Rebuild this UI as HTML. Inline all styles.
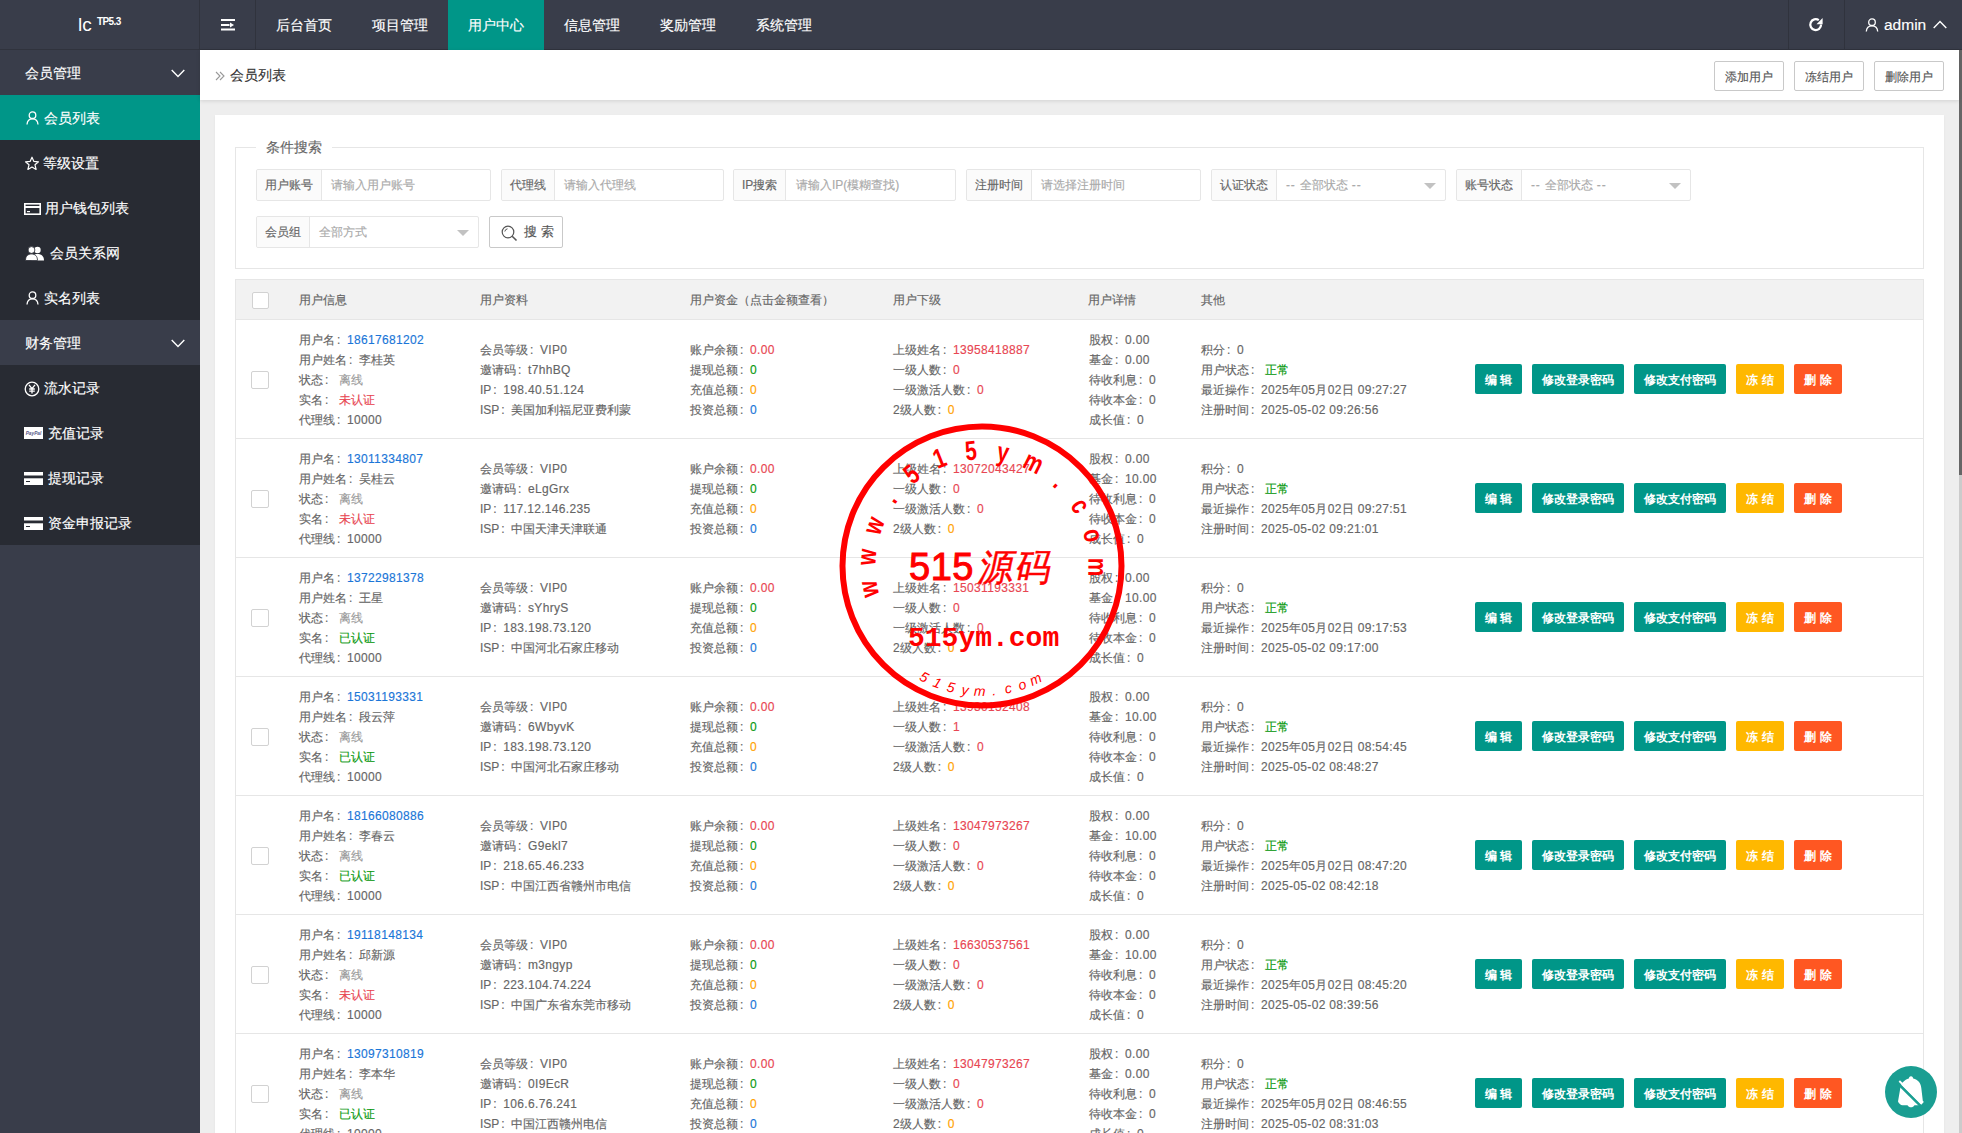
<!DOCTYPE html>
<html><head><meta charset="utf-8"><title>会员列表</title>
<style>
*{margin:0;padding:0;box-sizing:border-box}
html,body{width:1962px;height:1133px;overflow:hidden}
body{position:relative;background:#eeeeee;font-family:"Liberation Sans",sans-serif;font-size:12px;color:#666}
.abs{position:absolute}
/* header */
.hd{position:absolute;left:0;top:0;width:1962px;height:50px;background:#393D4A;border-bottom:1px solid #30333d}
.vl{position:absolute;top:0;width:1px;height:49px;background:#30333d}
.logo{position:absolute;left:78px;top:15px;color:#fff;font-size:19px;line-height:19px}
.logo sup{font-size:10px;position:absolute;left:18px;top:-1px;line-height:14px;font-weight:bold}
.nav{position:absolute;top:0;height:49px;line-height:49px;padding-top:1px;color:#fff;font-size:14px;text-align:center;width:96px}
.nav.on{background:#009688;height:50px}
.admin{position:absolute;left:1884px;top:13px;line-height:24px;color:#fff;font-size:15.5px}
.scroll{position:absolute;left:1959px;top:50px;width:3px;height:1083px;background:linear-gradient(#666 0,#666 425px,#cbcbcb 425px)}
/* side */
.side{position:absolute;left:0;top:50px;width:200px;height:1083px;background:#393D4A}
.mi{position:absolute;left:0;width:200px;height:45px;line-height:45px;color:#fff;font-size:14px}
.mi.child{background:#282B33}
.mi.on{background:#009688}
.mi span{position:absolute;top:1px}
/* content */
.crumb{position:absolute;left:200px;top:50px;width:1759px;height:50px;background:#fff;box-shadow:0 1px 4px rgba(0,0,0,.12)}
.crumb .t{position:absolute;left:30px;top:15px;line-height:20px;font-size:14px;color:#333}
.tb{position:absolute;top:11px;height:30px;line-height:30px;border:1px solid #c9c9c9;border-radius:2px;background:#fff;color:#555;font-size:12px;text-align:center;width:70px}
.card{position:absolute;left:215px;top:115px;width:1729px;height:1100px;background:#fff;box-shadow:0 1px 2px rgba(0,0,0,.06)}
.fs{position:absolute;left:235px;top:147px;width:1689px;height:122px;border:1px solid #e6e6e6}
.legend{position:absolute;left:256px;top:137px;padding:0 10px;background:#fff;font-size:14px;line-height:20px;color:#666}
.ig{position:absolute;height:32px;border:1px solid #e6e6e6;border-radius:2px;background:#fff}
.ig .lb{position:absolute;left:0;top:0;height:30px;line-height:31px;padding:0 8px;background:#FBFBFB;border-right:1px solid #e6e6e6;color:#666;font-size:12px;border-radius:2px 0 0 2px}
.ig .ph{position:absolute;top:0;height:30px;line-height:31px;color:#aaa;font-size:12px;white-space:nowrap}
.ig .ph s{text-decoration:none;letter-spacing:0.8px}
.tri{position:absolute;top:13px;width:0;height:0;border-left:6px solid transparent;border-right:6px solid transparent;border-top:6px solid #c2c2c2}
.sbtn{position:absolute;left:489px;top:216px;width:74px;height:32px;border:1px solid #c9c9c9;border-radius:2px;background:#fff;color:#555;font-size:13px;line-height:30px}
/* table */
.th{position:absolute;left:235px;top:279px;width:1689px;height:41px;background:#f2f2f2;border:1px solid #e6e6e6}
.th span{position:absolute;top:10px;line-height:20px;color:#666;font-size:12px}
.tbody{position:absolute;left:235px;top:320px;width:1689px;height:900px;border-left:1px solid #e6e6e6;border-right:1px solid #e6e6e6}
.tr{position:absolute;left:235px;width:1689px;height:119px;border-bottom:1px solid #e6e6e6}
.cb{position:absolute;left:16px;width:18px;height:18px;border:1px solid #d2d2d2;background:#fff;border-radius:2px}
.c{position:absolute;line-height:20px;font-size:12px;color:#666;white-space:nowrap}
.c p{height:20px}
.c b,.c i{font-weight:normal;font-style:normal}
.c1{left:64px;top:10px}
.c2{left:245px;top:20px}
.c3{left:455px;top:20px}
.c4{left:658px;top:20px}
.c5{left:854px;top:10px}
.c6{left:966px;top:20px}
.c i{padding-left:3.5px}
.c b{letter-spacing:0.33px}
.c u{display:inline-block;width:12px;padding-left:2px;text-decoration:none}
.blue{color:#1A76D8}
.red{color:#E84652}
.green{color:#0A990F}
.orange{color:#FFA200}
.gray{color:#9a9a9a}
.btns{position:absolute;left:1240px;top:44px}
.bt{position:absolute;top:0;height:30px;line-height:32px;border-radius:2px;color:#fff;font-size:12px;font-weight:bold;text-align:center;white-space:nowrap}
.teal{background:#009688}
.yel{background:#FFB800}
.org{background:#FF5722}
.fab{position:absolute;left:1885px;top:1066px;width:52px;height:52px;border-radius:50%;background:#1a9e92}
.c,.th span,.mi span,.nav,.ig .lb,.ig .ph,.legend,.crumb .t,.tb,.admin,.sbtn span{-webkit-text-stroke:0.15px currentColor}

</style></head>
<body>
<div class="hd">
  <div class="vl" style="left:199px"></div>
  <div class="vl" style="left:255px"></div>
  <div class="vl" style="left:1788px"></div>
  <div class="vl" style="left:1844px"></div>
  <div class="logo">lc</div><div class="abs" style="left:97px;top:16.4px;font-size:10px;line-height:11px;font-weight:bold;color:#fff;letter-spacing:-0.6px">TP5.3</div>
  <svg class="abs" style="left:221px;top:19px" width="14" height="12" viewBox="0 0 14 12"><rect x="0" y="0" width="14" height="2" fill="#fff"/><rect x="0" y="5" width="8.5" height="2" fill="#fff"/><path d="M9 3.6 L13 6 L9 8.4 Z" fill="#fff"/><rect x="0" y="9.5" width="14" height="2" fill="#fff"/></svg>
  <div class="nav" style="left:256px">后台首页</div>
  <div class="nav" style="left:352px">项目管理</div>
  <div class="nav on" style="left:448px">用户中心</div>
  <div class="nav" style="left:544px">信息管理</div>
  <div class="nav" style="left:640px">奖励管理</div>
  <div class="nav" style="left:736px">系统管理</div>
  <svg class="abs" style="left:1808px;top:17px" width="16" height="16" viewBox="0 0 16 16"><path d="M13.1 7.6 A5.4 5.4 0 1 1 10.8 3.2" fill="none" stroke="#fff" stroke-width="2.2"/><path d="M8.5 7.2 L14.6 7.2 L14.6 1 Z" fill="#fff"/></svg>
  <svg class="abs" style="left:1865px;top:18px" width="14" height="14" viewBox="0 0 14 14"><circle cx="7" cy="4.2" r="3.3" fill="none" stroke="#fff" stroke-width="1.3"/><path d="M1.3 13.5 C1.6 9.6 4 7.8 7 7.8 C10 7.8 12.4 9.6 12.7 13.5" fill="none" stroke="#fff" stroke-width="1.3"/></svg>
  <div class="admin">admin</div>
  <svg class="abs" style="left:1933px;top:20px" width="14" height="9" viewBox="0 0 14 9"><path d="M0.7 8 L7 1.5 L13.3 8" fill="none" stroke="#fff" stroke-width="1.4"/></svg>
</div>
<div class="scroll"></div>

<div class="side">
  <div class="mi" style="top:0"><span style="left:25px">会员管理</span><svg class="abs" style="left:171px;top:19px" width="14" height="9" viewBox="0 0 14 9"><path d="M0.7 1 L7 7.5 L13.3 1" fill="none" stroke="#fff" stroke-width="1.4"/></svg></div>
  <div class="mi on" style="top:45px"><svg class="abs" style="left:26px;top:16px" width="13" height="14" viewBox="0 0 13 14"><circle cx="6.5" cy="4.2" r="3.3" fill="none" stroke="#fff" stroke-width="1.3"/><path d="M1 13.5 C1.3 9.6 3.6 7.8 6.5 7.8 C9.4 7.8 11.7 9.6 12 13.5" fill="none" stroke="#fff" stroke-width="1.3"/></svg><span style="left:44px">会员列表</span></div>
  <div class="mi child" style="top:90px"><svg class="abs" style="left:24px;top:16px" width="16" height="15" viewBox="0 0 16 15"><path d="M8 1.2 L9.9 5.4 L14.5 5.8 L11 8.8 L12.1 13.4 L8 11 L3.9 13.4 L5 8.8 L1.5 5.8 L6.1 5.4 Z" fill="none" stroke="#fff" stroke-width="1.2" stroke-linejoin="round"/></svg><span style="left:43px">等级设置</span></div>
  <div class="mi child" style="top:135px"><svg class="abs" style="left:24px;top:18px" width="17" height="12" viewBox="0 0 17 12"><rect x="0.8" y="0.8" width="15.4" height="10.4" fill="none" stroke="#fff" stroke-width="1.6"/><rect x="0.8" y="3" width="15.4" height="2" fill="#fff"/><rect x="3" y="8" width="3" height="1.2" fill="#fff"/></svg><span style="left:45px">用户钱包列表</span></div>
  <div class="mi child" style="top:180px"><svg class="abs" style="left:25px;top:16px" width="20" height="15" viewBox="0 0 20 15"><circle cx="12.5" cy="4" r="3.2" fill="#fff"/><path d="M6.5 14.5 C6.5 10 9 8 12.5 8 C16 8 19 10 19 14.5 Z" fill="#fff"/><circle cx="6.5" cy="4" r="3.4" fill="#fff" stroke="#282B33" stroke-width="0.8"/><path d="M0.5 14.5 C0.5 10 3 8 6.5 8 C10 8 12.5 10 12.5 14.5 Z" fill="#fff" stroke="#282B33" stroke-width="0.8"/></svg><span style="left:50px">会员关系网</span></div>
  <div class="mi child" style="top:225px"><svg class="abs" style="left:26px;top:16px" width="13" height="14" viewBox="0 0 13 14"><circle cx="6.5" cy="4.2" r="3.3" fill="none" stroke="#fff" stroke-width="1.3"/><path d="M1 13.5 C1.3 9.6 3.6 7.8 6.5 7.8 C9.4 7.8 11.7 9.6 12 13.5" fill="none" stroke="#fff" stroke-width="1.3"/></svg><span style="left:44px">实名列表</span></div>
  <div class="mi" style="top:270px"><span style="left:25px">财务管理</span><svg class="abs" style="left:171px;top:19px" width="14" height="9" viewBox="0 0 14 9"><path d="M0.7 1 L7 7.5 L13.3 1" fill="none" stroke="#fff" stroke-width="1.4"/></svg></div>
  <div class="mi child" style="top:315px"><svg class="abs" style="left:24px;top:16px" width="16" height="16" viewBox="0 0 16 16"><circle cx="8" cy="8" r="6.8" fill="none" stroke="#fff" stroke-width="1.3"/><path d="M5 3.8 L8 7.6 L11 3.8 M8 7.6 V12.6 M5.2 8 H10.8 M5.2 10.2 H10.8" fill="none" stroke="#fff" stroke-width="1.3"/></svg><span style="left:44px">流水记录</span></div>
  <div class="mi child" style="top:360px"><svg class="abs" style="left:24px;top:17px" width="19" height="12" viewBox="0 0 19 12"><rect x="0" y="0" width="19" height="12" fill="#fff"/><text x="9.5" y="7.8" font-size="4.8" fill="#5a5a8a" text-anchor="middle" font-style="italic" font-weight="bold" font-family="Liberation Sans">PayPal</text></svg><span style="left:48px">充值记录</span></div>
  <div class="mi child" style="top:405px"><svg class="abs" style="left:24px;top:17px" width="19" height="13" viewBox="0 0 19 13"><rect x="0" y="0" width="19" height="13" fill="#fff"/><rect x="0" y="3.5" width="19" height="2.8" fill="#282B33"/><rect x="2" y="9" width="4" height="1" fill="#282B33"/></svg><span style="left:48px">提现记录</span></div>
  <div class="mi child" style="top:450px"><svg class="abs" style="left:24px;top:17px" width="19" height="13" viewBox="0 0 19 13"><rect x="0" y="0" width="19" height="13" fill="#fff"/><rect x="0" y="3.5" width="19" height="2.8" fill="#282B33"/><rect x="2" y="9" width="4" height="1" fill="#282B33"/></svg><span style="left:48px">资金申报记录</span></div>
</div>

<div class="crumb">
  <svg class="abs" style="left:15px;top:21px" width="10" height="10" viewBox="0 0 10 10"><path d="M1 1 L5 5 L1 9 M5 1 L9 5 L5 9" fill="none" stroke="#999" stroke-width="1.1"/></svg>
  <div class="t">会员列表</div>
  <div class="tb" style="left:1514px">添加用户</div>
  <div class="tb" style="left:1594px">冻结用户</div>
  <div class="tb" style="left:1674px">删除用户</div>
</div>

<div class="card"></div>
<div class="fs"></div>
<div class="legend">条件搜索</div>

<div class="ig" style="left:256px;top:169px;width:235px"><div class="lb">用户账号</div><div class="ph" style="left:74px">请输入用户账号</div></div>
<div class="ig" style="left:501px;top:169px;width:223px"><div class="lb">代理线</div><div class="ph" style="left:62px">请输入代理线</div></div>
<div class="ig" style="left:733px;top:169px;width:223px"><div class="lb">IP搜索</div><div class="ph" style="left:62px">请输入IP(模糊查找)</div></div>
<div class="ig" style="left:966px;top:169px;width:235px"><div class="lb">注册时间</div><div class="ph" style="left:74px">请选择注册时间</div></div>
<div class="ig" style="left:1211px;top:169px;width:235px"><div class="lb">认证状态</div><div class="ph" style="left:74px"><s>--&nbsp;</s>全部状态<s>&nbsp;--</s></div><div class="tri" style="left:212px"></div></div>
<div class="ig" style="left:1456px;top:169px;width:235px"><div class="lb">账号状态</div><div class="ph" style="left:74px"><s>--&nbsp;</s>全部状态<s>&nbsp;--</s></div><div class="tri" style="left:212px"></div></div>
<div class="ig" style="left:256px;top:216px;width:223px"><div class="lb">会员组</div><div class="ph" style="left:62px">全部方式</div><div class="tri" style="left:200px"></div></div>
<div class="sbtn"><svg class="abs" style="left:11px;top:8px" width="17" height="17" viewBox="0 0 17 17"><circle cx="7" cy="7" r="5.8" fill="none" stroke="#555" stroke-width="1.2"/><path d="M11.2 11.2 L15.5 15.5" stroke="#555" stroke-width="1.6"/><path d="M3.8 6.5 A3.3 3.3 0 0 1 6.5 3.8" fill="none" stroke="#555" stroke-width="1"/></svg><span class="abs" style="left:34px;top:0">搜 索</span></div>

<div class="th">
  <span class="cb" style="left:16px;top:12px;width:17px;height:17px"></span>
  <span style="left:63px">用户信息</span>
  <span style="left:244px">用户资料</span>
  <span style="left:454px">用户资金（点击金额查看）</span>
  <span style="left:657px">用户下级</span>
  <span style="left:852px">用户详情</span>
  <span style="left:965px">其他</span>
</div>
<div class="tbody"></div>
<div class="tr" style="top:320px">
<span class="cb" style="top:51px"></span>
<div class="c c1"><p>用户名<u>:</u><b class="blue">18617681202</b></p><p>用户姓名<u>:</u>李桂英</p><p>状态<u>:</u><i class="gray">离线</i></p><p>实名<u>:</u><i class="red">未认证</i></p><p>代理线<u>:</u><b>10000</b></p></div>
<div class="c c2"><p>会员等级<u>:</u><b>VIP0</b></p><p>邀请码<u>:</u><b>t7hhBQ</b></p><p>IP<u>:</u><b>198.40.51.124</b></p><p>ISP<u>:</u>美国加利福尼亚费利蒙</p></div>
<div class="c c3"><p>账户余额<u>:</u><b class="red">0.00</b></p><p>提现总额<u>:</u><b class="green">0</b></p><p>充值总额<u>:</u><b class="orange">0</b></p><p>投资总额<u>:</u><b class="blue">0</b></p></div>
<div class="c c4"><p>上级姓名<u>:</u><b class="red">13958418887</b></p><p>一级人数<u>:</u><b class="red">0</b></p><p>一级激活人数<u>:</u><b class="red">0</b></p><p>2级人数<u>:</u><b class="orange">0</b></p></div>
<div class="c c5"><p>股权<u>:</u><b>0.00</b></p><p>基金<u>:</u><b>0.00</b></p><p>待收利息<u>:</u><b>0</b></p><p>待收本金<u>:</u><b>0</b></p><p>成长值<u>:</u><b>0</b></p></div>
<div class="c c6"><p>积分<u>:</u><b>0</b></p><p>用户状态<u>:</u><i class="green">正常</i></p><p>最近操作<u>:</u><b>2025年05月02日 09:27:27</b></p><p>注册时间<u>:</u><b>2025-05-02 09:26:56</b></p></div>
<div class="btns"><span class="bt teal" style="width:47px">编 辑</span><span class="bt teal" style="left:57px;width:92px">修改登录密码</span><span class="bt teal" style="left:159px;width:92px">修改支付密码</span><span class="bt yel" style="left:261px;width:48px">冻 结</span><span class="bt org" style="left:319px;width:48px">删 除</span></div>
</div>
<div class="tr" style="top:439px">
<span class="cb" style="top:51px"></span>
<div class="c c1"><p>用户名<u>:</u><b class="blue">13011334807</b></p><p>用户姓名<u>:</u>吴桂云</p><p>状态<u>:</u><i class="gray">离线</i></p><p>实名<u>:</u><i class="red">未认证</i></p><p>代理线<u>:</u><b>10000</b></p></div>
<div class="c c2"><p>会员等级<u>:</u><b>VIP0</b></p><p>邀请码<u>:</u><b>eLgGrx</b></p><p>IP<u>:</u><b>117.12.146.235</b></p><p>ISP<u>:</u>中国天津天津联通</p></div>
<div class="c c3"><p>账户余额<u>:</u><b class="red">0.00</b></p><p>提现总额<u>:</u><b class="green">0</b></p><p>充值总额<u>:</u><b class="orange">0</b></p><p>投资总额<u>:</u><b class="blue">0</b></p></div>
<div class="c c4"><p>上级姓名<u>:</u><b class="red">13072043427</b></p><p>一级人数<u>:</u><b class="red">0</b></p><p>一级激活人数<u>:</u><b class="red">0</b></p><p>2级人数<u>:</u><b class="orange">0</b></p></div>
<div class="c c5"><p>股权<u>:</u><b>0.00</b></p><p>基金<u>:</u><b>10.00</b></p><p>待收利息<u>:</u><b>0</b></p><p>待收本金<u>:</u><b>0</b></p><p>成长值<u>:</u><b>0</b></p></div>
<div class="c c6"><p>积分<u>:</u><b>0</b></p><p>用户状态<u>:</u><i class="green">正常</i></p><p>最近操作<u>:</u><b>2025年05月02日 09:27:51</b></p><p>注册时间<u>:</u><b>2025-05-02 09:21:01</b></p></div>
<div class="btns"><span class="bt teal" style="width:47px">编 辑</span><span class="bt teal" style="left:57px;width:92px">修改登录密码</span><span class="bt teal" style="left:159px;width:92px">修改支付密码</span><span class="bt yel" style="left:261px;width:48px">冻 结</span><span class="bt org" style="left:319px;width:48px">删 除</span></div>
</div>
<div class="tr" style="top:558px">
<span class="cb" style="top:51px"></span>
<div class="c c1"><p>用户名<u>:</u><b class="blue">13722981378</b></p><p>用户姓名<u>:</u>王星</p><p>状态<u>:</u><i class="gray">离线</i></p><p>实名<u>:</u><i class="green">已认证</i></p><p>代理线<u>:</u><b>10000</b></p></div>
<div class="c c2"><p>会员等级<u>:</u><b>VIP0</b></p><p>邀请码<u>:</u><b>sYhryS</b></p><p>IP<u>:</u><b>183.198.73.120</b></p><p>ISP<u>:</u>中国河北石家庄移动</p></div>
<div class="c c3"><p>账户余额<u>:</u><b class="red">0.00</b></p><p>提现总额<u>:</u><b class="green">0</b></p><p>充值总额<u>:</u><b class="orange">0</b></p><p>投资总额<u>:</u><b class="blue">0</b></p></div>
<div class="c c4"><p>上级姓名<u>:</u><b class="red">15031193331</b></p><p>一级人数<u>:</u><b class="red">0</b></p><p>一级激活人数<u>:</u><b class="red">0</b></p><p>2级人数<u>:</u><b class="orange">0</b></p></div>
<div class="c c5"><p>股权<u>:</u><b>0.00</b></p><p>基金<u>:</u><b>10.00</b></p><p>待收利息<u>:</u><b>0</b></p><p>待收本金<u>:</u><b>0</b></p><p>成长值<u>:</u><b>0</b></p></div>
<div class="c c6"><p>积分<u>:</u><b>0</b></p><p>用户状态<u>:</u><i class="green">正常</i></p><p>最近操作<u>:</u><b>2025年05月02日 09:17:53</b></p><p>注册时间<u>:</u><b>2025-05-02 09:17:00</b></p></div>
<div class="btns"><span class="bt teal" style="width:47px">编 辑</span><span class="bt teal" style="left:57px;width:92px">修改登录密码</span><span class="bt teal" style="left:159px;width:92px">修改支付密码</span><span class="bt yel" style="left:261px;width:48px">冻 结</span><span class="bt org" style="left:319px;width:48px">删 除</span></div>
</div>
<div class="tr" style="top:677px">
<span class="cb" style="top:51px"></span>
<div class="c c1"><p>用户名<u>:</u><b class="blue">15031193331</b></p><p>用户姓名<u>:</u>段云萍</p><p>状态<u>:</u><i class="gray">离线</i></p><p>实名<u>:</u><i class="green">已认证</i></p><p>代理线<u>:</u><b>10000</b></p></div>
<div class="c c2"><p>会员等级<u>:</u><b>VIP0</b></p><p>邀请码<u>:</u><b>6WbyvK</b></p><p>IP<u>:</u><b>183.198.73.120</b></p><p>ISP<u>:</u>中国河北石家庄移动</p></div>
<div class="c c3"><p>账户余额<u>:</u><b class="red">0.00</b></p><p>提现总额<u>:</u><b class="green">0</b></p><p>充值总额<u>:</u><b class="orange">0</b></p><p>投资总额<u>:</u><b class="blue">0</b></p></div>
<div class="c c4"><p>上级姓名<u>:</u><b class="red">13930152408</b></p><p>一级人数<u>:</u><b class="red">1</b></p><p>一级激活人数<u>:</u><b class="red">0</b></p><p>2级人数<u>:</u><b class="orange">0</b></p></div>
<div class="c c5"><p>股权<u>:</u><b>0.00</b></p><p>基金<u>:</u><b>10.00</b></p><p>待收利息<u>:</u><b>0</b></p><p>待收本金<u>:</u><b>0</b></p><p>成长值<u>:</u><b>0</b></p></div>
<div class="c c6"><p>积分<u>:</u><b>0</b></p><p>用户状态<u>:</u><i class="green">正常</i></p><p>最近操作<u>:</u><b>2025年05月02日 08:54:45</b></p><p>注册时间<u>:</u><b>2025-05-02 08:48:27</b></p></div>
<div class="btns"><span class="bt teal" style="width:47px">编 辑</span><span class="bt teal" style="left:57px;width:92px">修改登录密码</span><span class="bt teal" style="left:159px;width:92px">修改支付密码</span><span class="bt yel" style="left:261px;width:48px">冻 结</span><span class="bt org" style="left:319px;width:48px">删 除</span></div>
</div>
<div class="tr" style="top:796px">
<span class="cb" style="top:51px"></span>
<div class="c c1"><p>用户名<u>:</u><b class="blue">18166080886</b></p><p>用户姓名<u>:</u>李春云</p><p>状态<u>:</u><i class="gray">离线</i></p><p>实名<u>:</u><i class="green">已认证</i></p><p>代理线<u>:</u><b>10000</b></p></div>
<div class="c c2"><p>会员等级<u>:</u><b>VIP0</b></p><p>邀请码<u>:</u><b>G9ekl7</b></p><p>IP<u>:</u><b>218.65.46.233</b></p><p>ISP<u>:</u>中国江西省赣州市电信</p></div>
<div class="c c3"><p>账户余额<u>:</u><b class="red">0.00</b></p><p>提现总额<u>:</u><b class="green">0</b></p><p>充值总额<u>:</u><b class="orange">0</b></p><p>投资总额<u>:</u><b class="blue">0</b></p></div>
<div class="c c4"><p>上级姓名<u>:</u><b class="red">13047973267</b></p><p>一级人数<u>:</u><b class="red">0</b></p><p>一级激活人数<u>:</u><b class="red">0</b></p><p>2级人数<u>:</u><b class="orange">0</b></p></div>
<div class="c c5"><p>股权<u>:</u><b>0.00</b></p><p>基金<u>:</u><b>10.00</b></p><p>待收利息<u>:</u><b>0</b></p><p>待收本金<u>:</u><b>0</b></p><p>成长值<u>:</u><b>0</b></p></div>
<div class="c c6"><p>积分<u>:</u><b>0</b></p><p>用户状态<u>:</u><i class="green">正常</i></p><p>最近操作<u>:</u><b>2025年05月02日 08:47:20</b></p><p>注册时间<u>:</u><b>2025-05-02 08:42:18</b></p></div>
<div class="btns"><span class="bt teal" style="width:47px">编 辑</span><span class="bt teal" style="left:57px;width:92px">修改登录密码</span><span class="bt teal" style="left:159px;width:92px">修改支付密码</span><span class="bt yel" style="left:261px;width:48px">冻 结</span><span class="bt org" style="left:319px;width:48px">删 除</span></div>
</div>
<div class="tr" style="top:915px">
<span class="cb" style="top:51px"></span>
<div class="c c1"><p>用户名<u>:</u><b class="blue">19118148134</b></p><p>用户姓名<u>:</u>邱新源</p><p>状态<u>:</u><i class="gray">离线</i></p><p>实名<u>:</u><i class="red">未认证</i></p><p>代理线<u>:</u><b>10000</b></p></div>
<div class="c c2"><p>会员等级<u>:</u><b>VIP0</b></p><p>邀请码<u>:</u><b>m3ngyp</b></p><p>IP<u>:</u><b>223.104.74.224</b></p><p>ISP<u>:</u>中国广东省东莞市移动</p></div>
<div class="c c3"><p>账户余额<u>:</u><b class="red">0.00</b></p><p>提现总额<u>:</u><b class="green">0</b></p><p>充值总额<u>:</u><b class="orange">0</b></p><p>投资总额<u>:</u><b class="blue">0</b></p></div>
<div class="c c4"><p>上级姓名<u>:</u><b class="red">16630537561</b></p><p>一级人数<u>:</u><b class="red">0</b></p><p>一级激活人数<u>:</u><b class="red">0</b></p><p>2级人数<u>:</u><b class="orange">0</b></p></div>
<div class="c c5"><p>股权<u>:</u><b>0.00</b></p><p>基金<u>:</u><b>10.00</b></p><p>待收利息<u>:</u><b>0</b></p><p>待收本金<u>:</u><b>0</b></p><p>成长值<u>:</u><b>0</b></p></div>
<div class="c c6"><p>积分<u>:</u><b>0</b></p><p>用户状态<u>:</u><i class="green">正常</i></p><p>最近操作<u>:</u><b>2025年05月02日 08:45:20</b></p><p>注册时间<u>:</u><b>2025-05-02 08:39:56</b></p></div>
<div class="btns"><span class="bt teal" style="width:47px">编 辑</span><span class="bt teal" style="left:57px;width:92px">修改登录密码</span><span class="bt teal" style="left:159px;width:92px">修改支付密码</span><span class="bt yel" style="left:261px;width:48px">冻 结</span><span class="bt org" style="left:319px;width:48px">删 除</span></div>
</div>
<div class="tr" style="top:1034px">
<span class="cb" style="top:51px"></span>
<div class="c c1"><p>用户名<u>:</u><b class="blue">13097310819</b></p><p>用户姓名<u>:</u>李本华</p><p>状态<u>:</u><i class="gray">离线</i></p><p>实名<u>:</u><i class="green">已认证</i></p><p>代理线<u>:</u><b>10000</b></p></div>
<div class="c c2"><p>会员等级<u>:</u><b>VIP0</b></p><p>邀请码<u>:</u><b>0I9EcR</b></p><p>IP<u>:</u><b>106.6.76.241</b></p><p>ISP<u>:</u>中国江西赣州电信</p></div>
<div class="c c3"><p>账户余额<u>:</u><b class="red">0.00</b></p><p>提现总额<u>:</u><b class="green">0</b></p><p>充值总额<u>:</u><b class="orange">0</b></p><p>投资总额<u>:</u><b class="blue">0</b></p></div>
<div class="c c4"><p>上级姓名<u>:</u><b class="red">13047973267</b></p><p>一级人数<u>:</u><b class="red">0</b></p><p>一级激活人数<u>:</u><b class="red">0</b></p><p>2级人数<u>:</u><b class="orange">0</b></p></div>
<div class="c c5"><p>股权<u>:</u><b>0.00</b></p><p>基金<u>:</u><b>0.00</b></p><p>待收利息<u>:</u><b>0</b></p><p>待收本金<u>:</u><b>0</b></p><p>成长值<u>:</u><b>0</b></p></div>
<div class="c c6"><p>积分<u>:</u><b>0</b></p><p>用户状态<u>:</u><i class="green">正常</i></p><p>最近操作<u>:</u><b>2025年05月02日 08:46:55</b></p><p>注册时间<u>:</u><b>2025-05-02 08:31:03</b></p></div>
<div class="btns"><span class="bt teal" style="width:47px">编 辑</span><span class="bt teal" style="left:57px;width:92px">修改登录密码</span><span class="bt teal" style="left:159px;width:92px">修改支付密码</span><span class="bt yel" style="left:261px;width:48px">冻 结</span><span class="bt org" style="left:319px;width:48px">删 除</span></div>
</div>
<svg class="abs" style="left:831.5px;top:416px" width="300" height="300" viewBox="0 0 300 300"><circle cx="150" cy="150" r="139.5" fill="none" stroke="#ff0000" stroke-width="6"/><text x="0" y="0" transform="translate(36.33,173.13) rotate(258.50) scale(0.8,1.05)" text-anchor="middle" dominant-baseline="central" font-family="Liberation Sans" font-weight="bold" font-size="26" fill="#ff0000">w</text><text x="0" y="0" transform="translate(34.36,140.90) rotate(274.50) scale(0.8,1.05)" text-anchor="middle" dominant-baseline="central" font-family="Liberation Sans" font-weight="bold" font-size="26" fill="#ff0000">w</text><text x="0" y="0" transform="translate(41.35,109.38) rotate(290.50) scale(0.8,1.05)" text-anchor="middle" dominant-baseline="central" font-family="Liberation Sans" font-weight="bold" font-size="26" fill="#ff0000">w</text><text x="0" y="0" transform="translate(56.75,81.00) rotate(306.50) scale(0.8,1.05)" text-anchor="middle" dominant-baseline="central" font-family="Liberation Sans" font-weight="bold" font-size="26" fill="#ff0000">.</text><text x="0" y="0" transform="translate(79.38,57.97) rotate(322.50) scale(0.8,1.05)" text-anchor="middle" dominant-baseline="central" font-family="Liberation Sans" font-weight="bold" font-size="26" fill="#ff0000">5</text><text x="0" y="0" transform="translate(107.49,42.07) rotate(338.50) scale(0.8,1.05)" text-anchor="middle" dominant-baseline="central" font-family="Liberation Sans" font-weight="bold" font-size="26" fill="#ff0000">1</text><text x="0" y="0" transform="translate(138.88,34.53) rotate(354.50) scale(0.8,1.05)" text-anchor="middle" dominant-baseline="central" font-family="Liberation Sans" font-weight="bold" font-size="26" fill="#ff0000">5</text><text x="0" y="0" transform="translate(171.14,35.94) rotate(370.50) scale(0.8,1.05)" text-anchor="middle" dominant-baseline="central" font-family="Liberation Sans" font-weight="bold" font-size="26" fill="#ff0000">y</text><text x="0" y="0" transform="translate(201.76,46.19) rotate(386.50) scale(0.8,1.05)" text-anchor="middle" dominant-baseline="central" font-family="Liberation Sans" font-weight="bold" font-size="26" fill="#ff0000">m</text><text x="0" y="0" transform="translate(228.37,64.48) rotate(402.50) scale(0.8,1.05)" text-anchor="middle" dominant-baseline="central" font-family="Liberation Sans" font-weight="bold" font-size="26" fill="#ff0000">.</text><text x="0" y="0" transform="translate(248.91,89.39) rotate(418.50) scale(0.8,1.05)" text-anchor="middle" dominant-baseline="central" font-family="Liberation Sans" font-weight="bold" font-size="26" fill="#ff0000">c</text><text x="0" y="0" transform="translate(261.78,119.00) rotate(434.50) scale(0.8,1.05)" text-anchor="middle" dominant-baseline="central" font-family="Liberation Sans" font-weight="bold" font-size="26" fill="#ff0000">o</text><text x="0" y="0" transform="translate(266.00,151.01) rotate(450.50) scale(0.8,1.05)" text-anchor="middle" dominant-baseline="central" font-family="Liberation Sans" font-weight="bold" font-size="26" fill="#ff0000">m</text><text x="0" y="0" transform="translate(92.28,260.88) rotate(27.50)" text-anchor="middle" dominant-baseline="central" font-family="Liberation Sans" font-style="italic" font-size="14" fill="#ff0000">5</text><text x="0" y="0" transform="translate(105.41,266.78) rotate(20.90)" text-anchor="middle" dominant-baseline="central" font-family="Liberation Sans" font-style="italic" font-size="14" fill="#ff0000">1</text><text x="0" y="0" transform="translate(119.13,271.13) rotate(14.30)" text-anchor="middle" dominant-baseline="central" font-family="Liberation Sans" font-style="italic" font-size="14" fill="#ff0000">5</text><text x="0" y="0" transform="translate(133.25,273.87) rotate(7.70)" text-anchor="middle" dominant-baseline="central" font-family="Liberation Sans" font-style="italic" font-size="14" fill="#ff0000">y</text><text x="0" y="0" transform="translate(147.60,274.98) rotate(1.10)" text-anchor="middle" dominant-baseline="central" font-family="Liberation Sans" font-style="italic" font-size="14" fill="#ff0000">m</text><text x="0" y="0" transform="translate(161.98,274.42) rotate(-5.50)" text-anchor="middle" dominant-baseline="central" font-family="Liberation Sans" font-style="italic" font-size="14" fill="#ff0000">.</text><text x="0" y="0" transform="translate(176.20,272.22) rotate(-12.10)" text-anchor="middle" dominant-baseline="central" font-family="Liberation Sans" font-style="italic" font-size="14" fill="#ff0000">c</text><text x="0" y="0" transform="translate(190.08,268.40) rotate(-18.70)" text-anchor="middle" dominant-baseline="central" font-family="Liberation Sans" font-style="italic" font-size="14" fill="#ff0000">o</text><text x="0" y="0" transform="translate(203.42,263.01) rotate(-25.30)" text-anchor="middle" dominant-baseline="central" font-family="Liberation Sans" font-style="italic" font-size="14" fill="#ff0000">m</text><text x="77" y="163.5" font-family="Liberation Sans" font-size="38" fill="#ff0000" stroke="#ff0000" stroke-width="1" letter-spacing="0.5">515</text><text transform="translate(145,163.5) skewX(-12) scale(0.95,1)" x="0" y="0" font-family="Liberation Sans" font-size="37" fill="#ff0000" stroke="#ff0000" stroke-width="0.5" letter-spacing="1">源码</text><text x="76" y="229.5" font-family="Liberation Mono" font-weight="bold" font-size="28" fill="#ff0000">515ym.com</text></svg>
<div class="fab"><svg class="abs" style="left:0;top:0" width="52" height="52" viewBox="0 0 52 52"><path d="M26 10.3 C27.5 10.3 28 11.5 28.2 12.6 C33 13.8 35.8 17 36.3 22 L37.8 34.8 C38.2 35.5 39 35.7 38.8 36 L36.5 38.5 C35.5 39.3 34.5 39.3 34 39.2 L29.5 39.2 C28.5 40.5 27.5 41.3 26 41.3 C24.5 41.3 23.5 40.5 22.5 39.2 L17.5 39.2 C15.5 39.2 14 37.5 13 35.5 L15.5 21 C16.5 17 19.5 13.8 23.8 12.6 C24 11.5 24.5 10.3 26 10.3 Z" fill="#fff"/><path d="M12.6 17 L35.3 39.7" stroke="#1a9f92" stroke-width="2.6"/><path d="M14.3 15 L36.8 37.5" stroke="#fff" stroke-width="1.8"/></svg></div>

</body></html>
